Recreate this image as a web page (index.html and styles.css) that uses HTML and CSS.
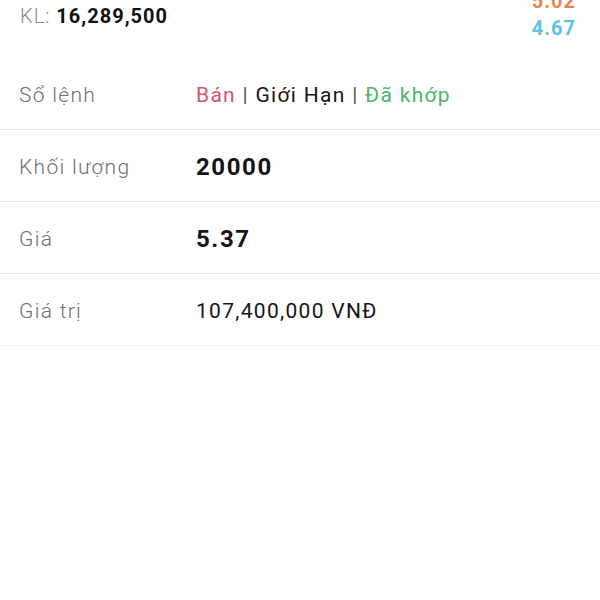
FILE: index.html
```html
<!DOCTYPE html>
<html lang="vi">
  <head>
    <meta charset="UTF-8" />
    <meta name="viewport" content="width=device-width, initial-scale=1.0" />
    <title>Chi tiết lệnh</title>
    <link rel="stylesheet" href="styles.css">
  </head>
  <body>
    <div class="summary">
      <div class="volume">
        <span class="volume-label">KL:</span>
        <span class="volume-value">16,289,500</span>
      </div>
      <div class="prices">
        <span class="price-high">5.02</span>
        <span class="price-low">4.67</span>
      </div>
    </div>

    <div class="detail-list">
      <div class="row">
        <div class="label">Sổ lệnh</div>
        <div class="value">
          <span class="sell">Bán</span>
          <span class="sep">|</span>
          Giới Hạn
          <span class="sep">|</span>
          <span class="matched">Đã khớp</span>
        </div>
      </div>
      <div class="row">
        <div class="label">Khối lượng</div>
        <div class="value strong">20000</div>
      </div>
      <div class="row">
        <div class="label">Giá</div>
        <div class="value strong">5.37</div>
      </div>
      <div class="row last">
        <div class="label">Giá trị</div>
        <div class="value">107,400,000 VNĐ</div>
      </div>
    </div>
  </body>
</html>
```

FILE: styles.css
```css
* {
  box-sizing: border-box;
  margin: 0;
  padding: 0;
}

body {
  font-family: Roboto, "Noto Sans", Arial, sans-serif;
  background-color: #fff;
  color: #111;
}

.summary {
  display: flex;
  justify-content: space-between;
  align-items: flex-start;
  height: 58px;
  padding: 0 24px 0 20px;
}

.volume {
  padding-top: 4px;
  font-size: 20px;
  letter-spacing: 1px;
}

.volume-label {
  color: #8a8a8a;
  font-weight: 300;
}

.volume-value {
  font-weight: 700;
  color: #111;
}

.prices {
  display: flex;
  flex-direction: column;
  align-items: flex-end;
  margin-top: -12px;
  font-size: 20px;
  font-weight: 700;
  line-height: 27px;
  letter-spacing: 1px;
}

.price-high {
  color: #e8854f;
}

.price-low {
  color: #5cc3e8;
}

.detail-list {
  display: flex;
  flex-direction: column;
}

.row {
  display: flex;
  align-items: center;
  height: 72px;
  padding-left: 19px;
  border-bottom: 1px solid #e6e6e6;
}

.row.last {
  border-bottom-color: #f5f5f5;
}

.label {
  width: 177px;
  font-size: 21px;
  font-weight: 300;
  color: #6f6f6f;
  letter-spacing: 1.3px;
  padding-top: 2px;
}

.value {
  font-size: 21px;
  color: #151515;
  letter-spacing: 1.3px;
  padding-top: 2px;
}

.value.strong {
  font-size: 24px;
  font-weight: 700;
  letter-spacing: 1.6px;
}

.sell {
  color: #d9546a;
}

.matched {
  color: #4cb56a;
}

.sep {
  color: #555;
}
```
